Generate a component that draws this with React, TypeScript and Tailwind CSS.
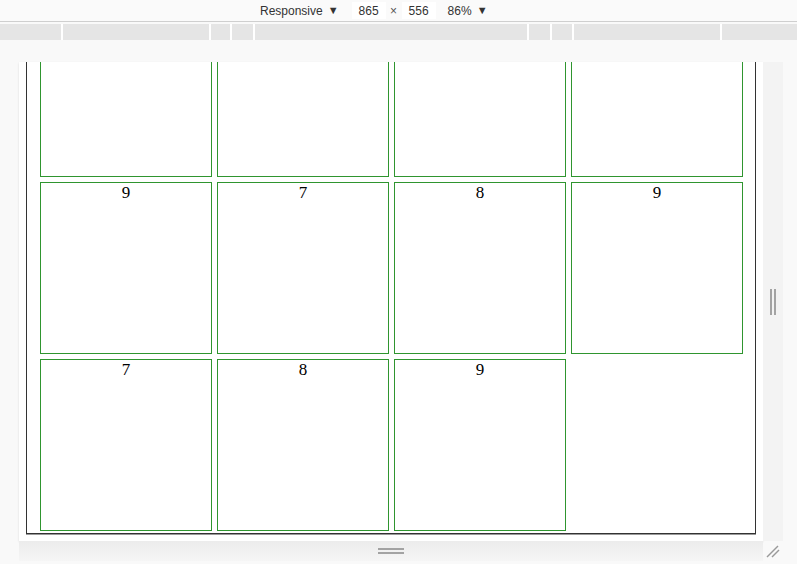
const filas: (number | null)[][] = [
  [null, null, null, null],
  [9, 7, 8, 9],
  [7, 8, 9],
];

const segmentos = [61, 146, 19, 21, 272, 21, 20, 146];

function Celda({ valor }: { valor: number | null }) {
  return (
    <div className="w-[172px] h-[172px] border border-[#2f952f] bg-white text-center text-[17px] leading-[20px] text-black font-['Liberation_Serif',serif]">
      {valor}
    </div>
  );
}

export default function App() {
  return (
    <div className="w-[797px] h-[564px] bg-[#f9f9f9] flex flex-col overflow-hidden font-['Liberation_Sans',Arial,sans-serif]">
      {/* barra superior */}
      <div className="h-[22px] bg-[#fafafa] border-b border-[#cfcfcf] flex items-center pl-[260px] text-[12px] text-[#333]">
        <span>Responsive</span>
        <span className="ml-[5px] text-[11px]">▼</span>
        <div className="ml-[13px] h-[17px] w-[34px] bg-white flex items-center justify-center">865</div>
        <span className="w-[16px] text-center text-[#555]">×</span>
        <div className="h-[17px] w-[34px] bg-white flex items-center justify-center">556</div>
        <span className="ml-[12px]">86%</span>
        <span className="ml-[5px] text-[11px]">▼</span>
      </div>

      {/* regla */}
      <div className="mt-[2px] h-[16px] bg-white flex gap-[2px]">
        {segmentos.map((w, i) => (
          <div key={i} className="h-full bg-[#e5e5e5]" style={{ width: w }} />
        ))}
        <div className="h-full flex-1 bg-[#e5e5e5]" />
      </div>

      {/* zona del viewport */}
      <div className="pl-[19px] pt-[22px] flex flex-col">
        <div className="flex">
          <div className="w-[744px] h-[479px] bg-white shadow-[0_1px_2px_rgba(0,0,0,0.12)] overflow-hidden flex flex-col justify-end px-[7px] pb-[7px]">
            <div className="border border-[#333] shadow-[0_1px_0_#999] pl-[13px] pr-[12px] pb-[2px] shrink-0">
              <div className="grid grid-cols-[repeat(4,172px)] gap-[5px]">
                {filas.flat().map((v, i) => (
                  <Celda key={i} valor={v} />
                ))}
              </div>
            </div>
          </div>
          <div className="w-[20px] h-[479px] bg-[#f3f3f3] flex items-center justify-center">
            <div className="flex gap-[2px] h-[26px]">
              <div className="w-[2px] bg-[#a3a3a3]" />
              <div className="w-[2px] bg-[#a3a3a3]" />
            </div>
          </div>
        </div>
        <div className="flex">
          <div className="w-[744px] h-[20px] bg-gradient-to-b from-[#ececec] to-[#f6f6f6] flex flex-col items-center justify-center gap-[2px]">
            <div className="w-[26px] h-[2px] bg-[#a3a3a3]" />
            <div className="w-[26px] h-[2px] bg-[#a3a3a3]" />
          </div>
          <div className="w-[20px] h-[20px] flex items-center justify-center">
            <svg width="14" height="14" viewBox="0 0 14 14">
              <line x1="1" y1="13" x2="12" y2="2" stroke="#9a9a9a" strokeWidth="1.5" />
              <line x1="6" y1="13" x2="13" y2="6" stroke="#9a9a9a" strokeWidth="1.5" />
            </svg>
          </div>
        </div>
      </div>
    </div>
  );
}
